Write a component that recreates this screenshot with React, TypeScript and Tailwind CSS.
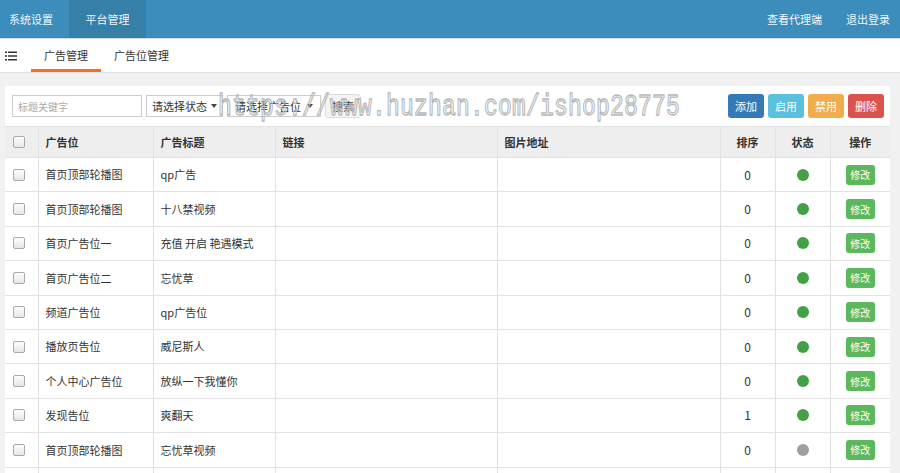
import { useState } from "react";

interface AdRow {
   slot: string;
   title: string;
   sort: number;
   enabled: boolean;
}

const rows: AdRow[] = [
   { slot: "首页顶部轮播图", title: "qp广告", sort: 0, enabled: true },
   { slot: "首页顶部轮播图", title: "十八禁视频", sort: 0, enabled: true },
   { slot: "首页广告位一", title: "充值 开启 艳遇模式", sort: 0, enabled: true },
   { slot: "首页广告位二", title: "忘忧草", sort: 0, enabled: true },
   { slot: "频道广告位", title: "qp广告位", sort: 0, enabled: true },
   { slot: "播放页告位", title: "威尼斯人", sort: 0, enabled: true },
   { slot: "个人中心广告位", title: "放纵一下我懂你", sort: 0, enabled: true },
   { slot: "发现告位", title: "爽翻天", sort: 1, enabled: true },
   { slot: "首页顶部轮播图", title: "忘忧草视频", sort: 0, enabled: false },
];

const Check = () => (
   <span className="block w-[12px] h-[12px] rounded-[2px] border border-[#a9a9a9] bg-gradient-to-b from-[#fdfdfd] to-[#e6e6e6]" />
);

const Caret = () => (
   <svg width="6" height="4" viewBox="0 0 6 4" className="shrink-0">
      <path d="M0 0h6L3 4z" fill="#444" />
   </svg>
);

const MenuIcon = () => (
   <svg width="12" height="10" viewBox="0 0 12 10">
      <rect x="0" y="0.5" width="2" height="1.5" fill="#333" />
      <rect x="3" y="0.5" width="9" height="1.5" fill="#333" />
      <rect x="0" y="4.25" width="2" height="1.5" fill="#333" />
      <rect x="3" y="4.25" width="9" height="1.5" fill="#333" />
      <rect x="0" y="8" width="2" height="1.5" fill="#333" />
      <rect x="3" y="8" width="9" height="1.5" fill="#333" />
   </svg>
);

const App = () => {
   const [tab, setTab] = useState(0);

   return (
      <div className="relative w-[900px] h-[473px] overflow-hidden bg-[#f1f1f1] text-[11px] text-[#333] font-['Noto_Sans_CJK_SC','Noto_Sans',sans-serif]">
         {/* top navigation */}
         <div className="h-[38px] bg-[#3c8dbc] flex items-stretch text-white/95 text-[11px]">
            <div className="w-[69px] flex items-center pl-[9px]">系统设置</div>
            <div className="w-[77px] flex items-center justify-center bg-[#367fa9]">平台管理</div>
            <div className="flex-1" />
            <div className="flex items-center pr-[24px]">查看代理端</div>
            <div className="flex items-center pr-[10px]">退出登录</div>
         </div>

         {/* tabs */}
         <div className="h-[35px] bg-white border-t border-[#d2d6de] border-b border-b-[#e3e3e3] flex items-stretch">
            <div className="w-[31px] flex items-center pl-[5px]">
               <MenuIcon />
            </div>
            {["广告管理", "广告位管理"].map((t, i) => (
               <button
                  key={t}
                  onClick={() => setTab(i)}
                  className={`px-[13px] flex items-center border-b-[3px] ${
                     tab === i ? "border-[#f37021]" : "border-transparent"
                  }`}
               >
                  <span className="mt-[2px]">{t}</span>
               </button>
            ))}
         </div>

         {/* content panel */}
         <div className="pt-[13px] pl-[5px] pr-[10px]">
            <div className="bg-white">
               <div className="h-[40px] flex items-center pl-[7px] pr-[6px] gap-[4px]">
                  <input
                     placeholder="标题关键字"
                     className="w-[130px] h-[22px] border border-[#ccc] px-[5px] text-[10px] placeholder:text-[#aaa] outline-none"
                  />
                  <div className="w-[77px] h-[22px] border border-[#ccc] flex items-center justify-between px-[5px]">
                     <span>请选择状态</span>
                     <Caret />
                  </div>
                  <div className="w-[94px] h-[22px] border border-[#ccc] flex items-center justify-between px-[7px]">
                     <span>请选择广告位</span>
                     <Caret />
                  </div>
                  <button className="w-[36px] h-[24px] rounded-[3px] border border-[#ddd] bg-[#f4f4f4]">搜索</button>
                  <div className="flex-1" />
                  <button className="w-[36px] h-[24px] rounded-[3px] bg-[#337ab7] text-white">添加</button>
                  <button className="w-[36px] h-[24px] rounded-[3px] bg-[#5bc0de] text-white">启用</button>
                  <button className="w-[36px] h-[24px] rounded-[3px] bg-[#f0ad4e] text-white">禁用</button>
                  <button className="w-[36px] h-[24px] rounded-[3px] bg-[#d9534f] text-white">删除</button>
               </div>

               <table className="w-full border-collapse table-fixed">
                  <colgroup>
                     <col className="w-[33px]" />
                     <col className="w-[115px]" />
                     <col className="w-[122px]" />
                     <col className="w-[222px]" />
                     <col className="w-[223px]" />
                     <col className="w-[55px]" />
                     <col className="w-[55px]" />
                     <col />
                  </colgroup>
                  <thead>
                     <tr className="h-[31px] bg-[#eeeeee] font-bold">
                        <th className="border border-[#e2e2e2] border-l-0 pl-[8px]">
                           <Check />
                        </th>
                        <th className="border border-[#e2e2e2] text-left pl-[7px]">广告位</th>
                        <th className="border border-[#e2e2e2] text-left pl-[7px]">广告标题</th>
                        <th className="border border-[#e2e2e2] text-left pl-[7px]">链接</th>
                        <th className="border border-[#e2e2e2] text-left pl-[7px]">图片地址</th>
                        <th className="border border-[#e2e2e2]">排序</th>
                        <th className="border border-[#e2e2e2]">状态</th>
                        <th className="border border-[#e2e2e2] border-r-0">操作</th>
                     </tr>
                  </thead>
                  <tbody>
                     {rows.map((r, i) => (
                        <tr key={i} className="h-[34.4px]">
                           <td className="border border-[#e2e2e2] border-l-0 pl-[8px]">
                              <Check />
                           </td>
                           <td className="border border-[#e2e2e2] pl-[7px]">{r.slot}</td>
                           <td className="border border-[#e2e2e2] pl-[7px]">{r.title}</td>
                           <td className="border border-[#e2e2e2]" />
                           <td className="border border-[#e2e2e2]" />
                           <td className="border border-[#e2e2e2] text-center text-[12px]">{r.sort}</td>
                           <td className="border border-[#e2e2e2]">
                              <span
                                 className={`block mx-auto w-[12px] h-[12px] rounded-full ${
                                    r.enabled ? "bg-[#43a047]" : "bg-[#9e9e9e]"
                                 }`}
                              />
                           </td>
                           <td className="border border-[#e2e2e2] border-r-0 text-center">
                              <button className="w-[29px] h-[20px] rounded-[3px] bg-[#5cb85c] text-white text-[10px]">修改</button>
                           </td>
                        </tr>
                     ))}
                     <tr className="h-[34.4px]">
                        <td className="border border-[#e2e2e2] border-l-0" />
                        <td className="border border-[#e2e2e2]" />
                        <td className="border border-[#e2e2e2]" />
                        <td className="border border-[#e2e2e2]" />
                        <td className="border border-[#e2e2e2]" />
                        <td className="border border-[#e2e2e2]" />
                        <td className="border border-[#e2e2e2]" />
                        <td className="border border-[#e2e2e2] border-r-0" />
                     </tr>
                  </tbody>
               </table>
            </div>
         </div>

         {/* site stamp over the toolbar */}
         <div className="absolute left-[218px] top-[93px] pointer-events-none font-['Liberation_Mono',monospace] text-[23px] leading-none text-transparent [-webkit-text-stroke:1px_#b8b8b8] scale-y-[1.3] origin-top-left tracking-[0.2px]">
            https://www.huzhan.com/ishop28775
         </div>
      </div>
   );
};

export default App;
